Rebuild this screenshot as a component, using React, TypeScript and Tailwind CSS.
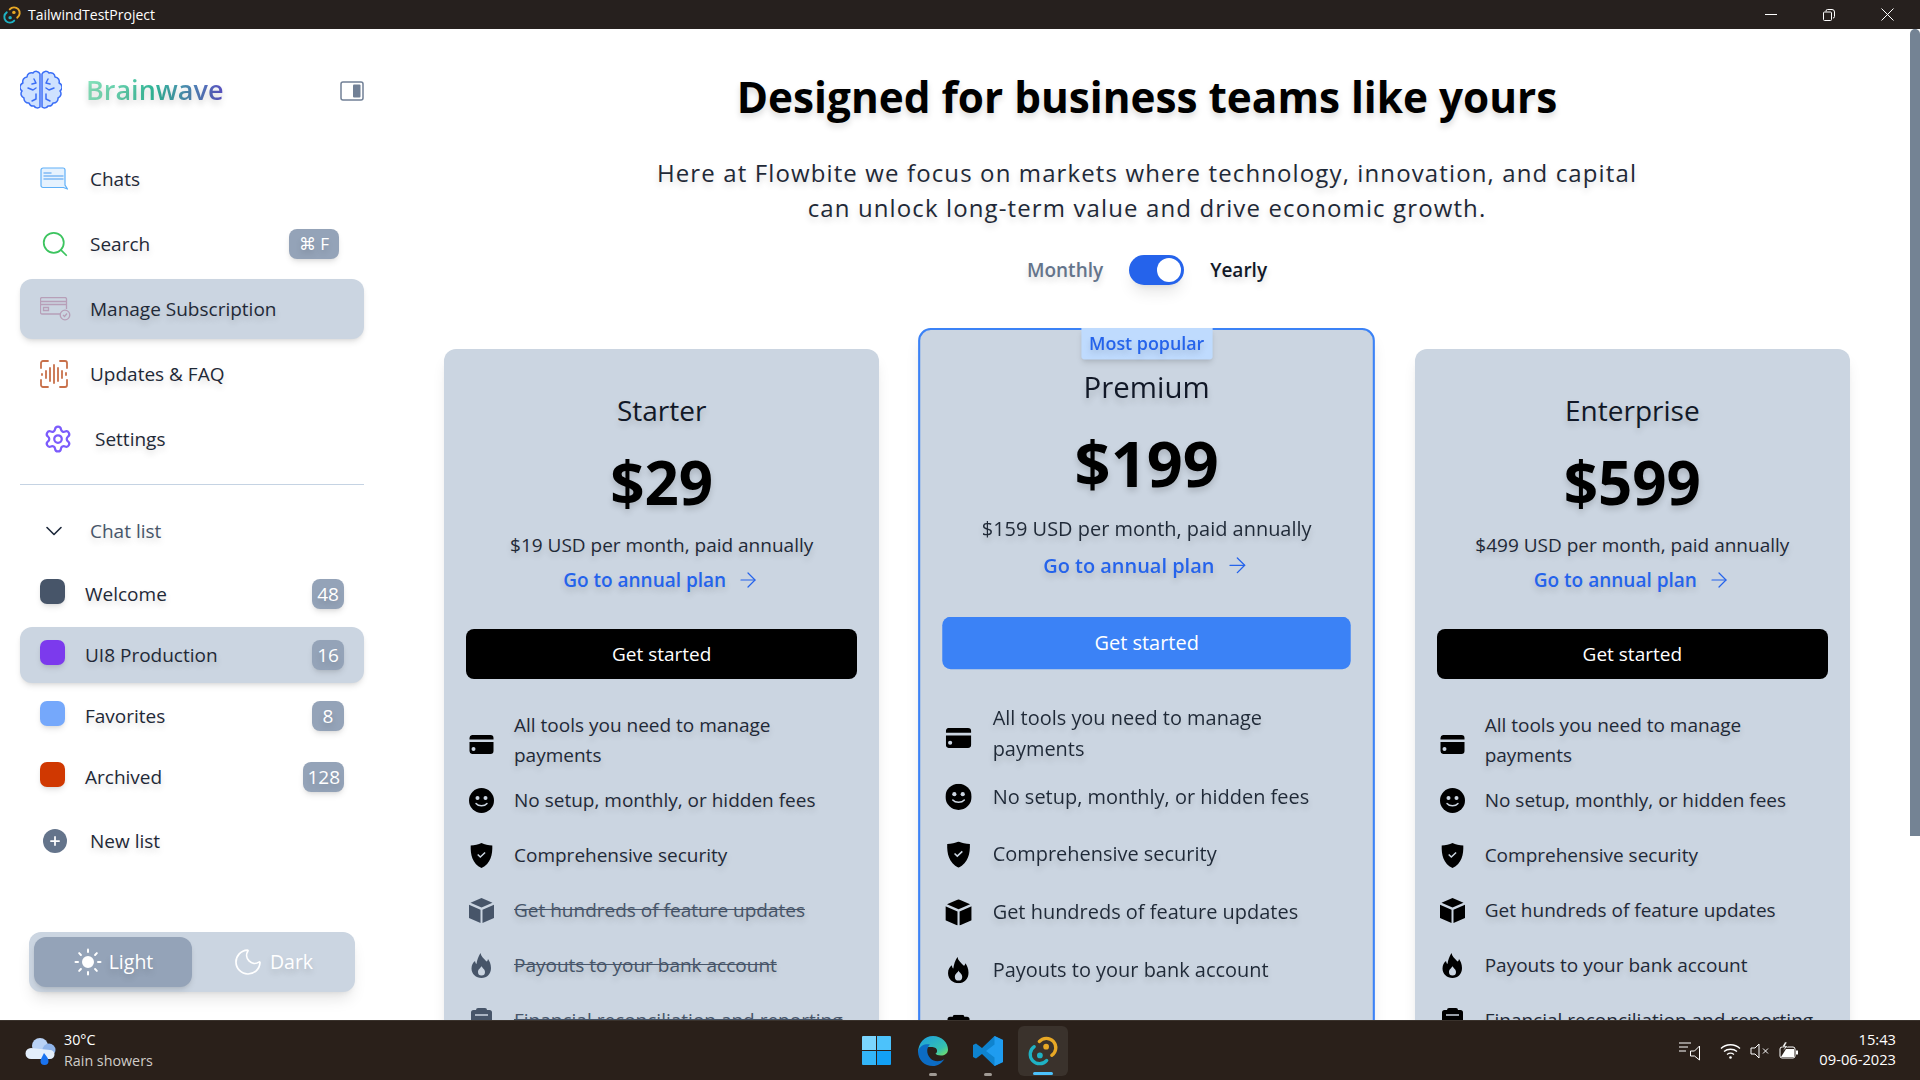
import { ArrowRight, ChevronDown, Moon, Plus, Search, Settings, Sun } from 'lucide-react';

const NAV = [
  { label: 'Chats', icon: <ChatIcon /> },
  { label: 'Search', icon: <Search className="w-[30px] h-[30px] text-[#3cc45f]" strokeWidth={1.4} />, kbd: true },
  { label: 'Manage Subscription', icon: <CardCheckIcon />, active: true },
  { label: 'Updates & FAQ', icon: <WaveIcon /> },
  { label: 'Settings', icon: <Settings className="ml-[3px] w-[30px] h-[30px] text-[#7c5cfc]" strokeWidth={1.8} />, indent: true },
];

const LISTS = [
  { label: 'Welcome', color: 'bg-[#475569]', count: 48 },
  { label: 'UI8 Production', color: 'bg-[#7c3aed]', count: 16, active: true },
  { label: 'Favorites', color: 'bg-[#75a8fb]', count: 8 },
  { label: 'Archived', color: 'bg-[#d03801]', count: 128 },
];

const PLANS = [
  { name: 'Starter', price: '$29', sub: '$19 USD per month, paid annually', off: 3 },
  { name: 'Premium', price: '$199', sub: '$159 USD per month, paid annually', popular: true, off: 6 },
  { name: 'Enterprise', price: '$599', sub: '$499 USD per month, paid annually', off: 6 },
];

const FEATURES = [
  { text: 'All tools you need to manage payments', icon: <CardSolid /> },
  { text: 'No setup, monthly, or hidden fees', icon: <SmileSolid /> },
  { text: 'Comprehensive security', icon: <ShieldSolid /> },
  { text: 'Get hundreds of feature updates', icon: <CubeSolid /> },
  { text: 'Payouts to your bank account', icon: <FlameSolid /> },
  { text: 'Financial reconciliation and reporting', icon: <ClipSolid /> },
];

function ChatIcon() {
  return (
    <svg width="28" height="24" viewBox="0 0 28 24" fill="none">
      <path d="M3 1h20a2 2 0 0 1 2 2v15l2.500 4-4-1.500H3a2 2 0 0 1-2-2V3a2 2 0 0 1 2-2z" fill="#e6f2fe" stroke="#60b0f8" strokeWidth="1.200" />
      <path d="M3.500 6h8M3.500 9h20M3.500 12h20" stroke="#4a9cf0" strokeWidth="1.200" />
    </svg>
  );
}

function CardCheckIcon() {
  return (
    <svg width="31" height="24" viewBox="0 0 31 24" fill="none" stroke="#b79fb8" strokeWidth="1.300">
      <path d="M23 17H2a1.500 1.500 0 0 1-1.500-1.500V2A1.500 1.500 0 0 1 2 .5h23A1.500 1.500 0 0 1 26.500 2v10" />
      <path d="M.5 4.500h26M.5 7.500h26M3.500 10.500h5v3h-5z" />
      <circle cx="25" cy="18" r="4.800" fill="#cbd5e1" />
      <path d="M23 18l1.500 1.500 2.500-3" />
    </svg>
  );
}

function WaveIcon() {
  return (
    <svg width="28" height="28" viewBox="0 0 28 28" fill="none" stroke="#c8704a" strokeWidth="1.800" strokeLinecap="round">
      <path d="M8 1H3a2 2 0 0 0-2 2v5M20 1h5a2 2 0 0 1 2 2v5M8 27H3a2 2 0 0 1-2-2v-5M20 27h5a2 2 0 0 0 2-2v-5" />
      <path d="M2 14v1M6 11v7M10 8v13M14 5v18M18 8v13M22 11v7M26 13v2" />
    </svg>
  );
}

function BrainLogo() {
  return (
    <svg width="42" height="40" viewBox="0 0 42 40" fill="#cfe2ff" stroke="#3b6ef6" strokeWidth="1.500" strokeLinecap="round" strokeLinejoin="round">
      <path d="M20 4A4 4 0 0 0 13 3A4.500 4.500 0 0 0 7 7A4.500 4.500 0 0 0 3 13A4.500 4.500 0 0 0 2 21A4.500 4.500 0 0 0 4 28A4.500 4.500 0 0 0 9 33A4.500 4.500 0 0 0 14 36A4 4 0 0 0 20 37Z" />
      <path d="M22 4A4 4 0 0 1 29 3A4.500 4.500 0 0 1 35 7A4.500 4.500 0 0 1 39 13A4.500 4.500 0 0 1 40 21A4.500 4.500 0 0 1 38 28A4.500 4.500 0 0 1 33 33A4.500 4.500 0 0 1 28 36A4 4 0 0 1 22 37Z" />
      <path d="M14 9l2 4-4 1M8 18l5 2 3-2M16 24v5l-4 2M28 9l-2 4 4 1M34 18l-5 2-3-2M26 24v5l4 2" fill="none" />
    </svg>
  );
}

function CardSolid() {
  return (
    <svg width="25" height="19" viewBox="0 0 25 19" fill="black">
      <path d="M3 0h18.500A3 3 0 0 1 24.500 3v1.500H.5V3A3 3 0 0 1 3 0zM.5 7h24v9a3 3 0 0 1-3 3H3a3 3 0 0 1-2.500-3zm4 5a2 2 0 1 0 0 4 2 2 0 0 0 0-4z" fillRule="evenodd" />
    </svg>
  );
}

function SmileSolid() {
  return (
    <svg width="25" height="25" viewBox="0 0 25 25">
      <circle cx="12.500" cy="12.500" r="12.500" fill="black" />
      <circle cx="8.500" cy="10" r="2" fill="#cbd5e1" />
      <circle cx="16.500" cy="10" r="2" fill="#cbd5e1" />
      <path d="M7 15.500c2.500 3 8.500 3 11 0" fill="none" stroke="#cbd5e1" strokeWidth="1.400" strokeLinecap="round" />
    </svg>
  );
}

function ShieldSolid() {
  return (
    <svg width="25" height="25" viewBox="0 0 25 25">
      <path d="M12.500 0c3 1.600 7 2.300 10.800 2.400.3 9-1.500 18-10.800 22.600C3.200 20.400 1.400 11.400 1.700 2.400 5.500 2.300 9.500 1.600 12.500 0z" fill="black" />
      <path d="M8.700 11.500l2.600 2.500 4.800-4.500" fill="none" stroke="#cbd5e1" strokeWidth="1.500" />
    </svg>
  );
}

function CubeSolid() {
  return (
    <svg width="25" height="25" viewBox="0 0 25 25" fill="black">
      <path d="M12.500 0l11 4.700-11 4.800-11-4.800z" />
      <path d="M0 6.700l11.500 5V25L0 20zM25 6.700l-11.500 5V25L25 20z" />
    </svg>
  );
}

function FlameSolid() {
  return (
    <svg width="25" height="25" viewBox="0 0 25 25" fill="black">
      <path fillRule="evenodd" d="M11.500 0c.5 3.500 3 5 5.500 8 1 1 1.500 0 2-2 1.500 2 3 5 3 9 0 6-4 10-9.500 10S2.500 21 2.500 15.500c0-3.500 1.500-6 3.500-7.500.5 1.500.5 2.500 1.500 3C8 7 9.500 3 11.500 0zM12.500 13c-.5 2-3.500 3-3.500 6a3.500 3.500 0 0 0 7 0c0-3-3-4-3.500-6z" />
    </svg>
  );
}

function ClipSolid() {
  return (
    <svg width="25" height="25" viewBox="0 0 25 25" fill="black">
      <path d="M9 0h7a2 2 0 0 1 2 2h2.500A2.500 2.500 0 0 1 23 4.500V22a3 3 0 0 1-3 3H5a3 3 0 0 1-3-3V4.500A2.500 2.500 0 0 1 4.500 2H7a2 2 0 0 1 2-2z" />
      <path d="M6 7h13" stroke="#cbd5e1" strokeWidth="1.500" />
    </svg>
  );
}

function TauriIcon({ size = 16 }: { size?: number }) {
  return (
    <svg width={size} height={size} viewBox="0 0 24 24" fill="none" strokeWidth="2.600" strokeLinecap="round">
      <path d="M9 4.500a7.500 7.500 0 1 1 10 11" stroke="#e8a825" />
      <path d="M15 19.500a7.500 7.500 0 1 1-10-11" stroke="#1fb2c4" />
      <circle cx="14.500" cy="8.500" r="2.300" fill="#e8a825" />
      <circle cx="9.500" cy="15.500" r="2.300" fill="#1fb2c4" />
    </svg>
  );
}

function WeatherIcon() {
  return (
    <svg width="32" height="30" viewBox="0 0 32 30">
      <circle cx="15" cy="10" r="8" fill="#b9d2f5" />
      <circle cx="24" cy="14" r="6.500" fill="#8fb4ea" />
      <path d="M6 12a5.500 5.500 0 0 0 0 11h19a4.500 4.500 0 0 0 0-9z" fill="#e3eefb" />
      <path d="M19 17c2 3 4.500 5 4.500 8a4 4 0 0 1-8 0c0-1 .5-2 1-3z" fill="#1a73f0" />
    </svg>
  );
}

function WinIcon() {
  return (
    <svg width="29" height="29" viewBox="0 0 29 29">
      <path d="M0 1a1 1 0 0 1 1-1h13v14H0z" fill="#7bd5fe" />
      <path d="M15 0h13a1 1 0 0 1 1 1v13H15z" fill="#4cc2fb" />
      <path d="M0 15h14v14H1a1 1 0 0 1-1-1z" fill="#33b5f8" />
      <path d="M15 15h14v13a1 1 0 0 1-1 1H15z" fill="#12a0f5" />
    </svg>
  );
}

function EdgeIcon() {
  return (
    <svg width="30" height="30" viewBox="0 0 30 30">
      <defs>
        <linearGradient id="edgeTop" x1="0" y1="0" x2="1" y2="1">
          <stop offset="0" stopColor="#1b9de2" />
          <stop offset="0.7" stopColor="#35c1b0" />
          <stop offset="1" stopColor="#7de15e" />
        </linearGradient>
      </defs>
      <path d="M15 0C24 0 30 6.500 30 13.500c0 4-3.500 6-7 6-3 0-5-1-5.500-2 2.500-1 2.500-6-3-6.500C8 10.500 2 13 0 17 0 7 6.500 0 15 0z" fill="url(#edgeTop)" />
      <path d="M0 15c2-6 8-7.500 12-6.500-3.500 3-4 9 .5 14 3.500 3.500 9.500 3.500 14 .5-3 4.500-7 7-11.500 7C6.500 30 0 24 0 15z" fill="#0c6cc4" />
    </svg>
  );
}

function CodeIcon() {
  return (
    <svg width="30" height="30" viewBox="0 0 30 30">
      <path d="M21.500 0L30 4v22l-8.500 4L9 18l-6 4.500L0 21v-12l3-1.500L9 12z" fill="#0e83cf" />
      <path d="M21.500 0L30 4v22l-8.500 4zM21.500 8.500L13 15l8.500 6.500z" fill="#1f9cf0" fillRule="evenodd" />
    </svg>
  );
}

function TrayIcons() {
  return (
    <div className="flex items-center text-white">
      <svg width="22" height="20" viewBox="0 0 22 20" fill="none" stroke="white" strokeWidth="1">
        <path d="M0 2h12M0 6h9M0 10h7M20.500 5v14l-5-4h-4V10h4z" />
      </svg>
      <svg className="ml-[19px]" width="21" height="16" viewBox="0 0 21 16" fill="none" stroke="white" strokeWidth="1.300">
        <path d="M1 5.500c5-5 14-5 19 0M4 8.500c3.500-3 9.500-3 13 0M7 11.500c2-1.500 5-1.500 7 0" />
        <circle cx="10.500" cy="14.500" r="1.300" fill="white" stroke="none" />
      </svg>
      <svg className="ml-[9px]" width="20" height="16" viewBox="0 0 20 16" fill="none" stroke="white" strokeWidth="1">
        <path d="M9 1v14l-4-4H1V5h4zM13 5.500l5 5M18 5.500l-5 5" />
      </svg>
      <svg className="ml-[9px]" width="20" height="18" viewBox="0 0 20 18" fill="none">
        <rect x="1" y="5" width="15" height="11" rx="2" stroke="white" />
        <path d="M2 15l5-8h8v8z" fill="white" />
        <path d="M17 8.500h2v4h-2z" fill="white" />
        <path d="M6 0L3 5h3L4 9l5-5H6l2-4z" fill="white" stroke="#2a201a" strokeWidth="0.500" />
      </svg>
    </div>
  );
}

function Badge({ children }: { children: React.ReactNode }) {
  return <span className="ml-auto h-[30px] min-w-[32px] px-[4px] rounded-lg bg-[#94a3b8] text-white text-[19px] font-medium leading-[30px] text-center shadow-md">{children}</span>;
}

function Sidebar() {
  return (
    <aside className="w-[384px] shrink-0 px-5 flex flex-col">
      <div className="h-[100px] pt-[41px] flex items-start">
        <BrainLogo />
        <span className="ml-[24px] text-[27px] leading-[40px] font-semibold bg-gradient-to-r from-[#8be8c0] via-[#2fb99a] to-[#5a52c4] bg-clip-text text-transparent">Brainwave</span>
        <svg className="ml-auto mt-[11px]" width="24" height="20" viewBox="0 0 24 20" fill="none">
          <rect x="1" y="1" width="22" height="18" rx="2" stroke="#718096" strokeWidth="1.500" />
          <rect x="13" y="3.500" width="7.500" height="13" rx="1" fill="#718096" />
        </svg>
      </div>
      <nav className="mt-[20px] flex flex-col gap-[5px]">
        {NAV.map((item) => (
          <div key={item.label} className={'h-[60px] rounded-xl flex items-center text-[19px] text-[#1f2937] ' + (item.active ? 'bg-[#cbd5e1] shadow-md' : '')}>
            <span className="w-[70px] pl-[20px] flex justify-start items-center shrink-0">{item.icon}</span>
            <span className={item.indent ? 'ml-[5px]' : ''}>{item.label}</span>
            {item.kbd && <span className="ml-auto mr-[25px] h-[30px] w-[50px] rounded-lg bg-[#94a3b8] text-white text-[17px] leading-[30px] text-center shadow-md">⌘ F</span>}
          </div>
        ))}
      </nav>
      <div className="mt-[15px] border-t border-[#c5d3e3]" />
      <div className="mt-[26px] h-[40px] flex items-center text-[19px] text-[#475569]">
        <ChevronDown className="ml-[20px] w-[28px] h-[28px] text-[#1e293b]" strokeWidth={1.4} />
        <span className="ml-[22px]">Chat list</span>
      </div>
      <div className="mt-[15px] flex flex-col gap-[5px]">
        {LISTS.map((l) => (
          <div key={l.label} className={'h-[56px] rounded-xl flex items-center pl-[20px] pr-[20px] text-[19px] text-[#1f2937] ' + (l.active ? 'bg-[#cbd5e1] shadow-md' : '')}>
            <span className={'w-[25px] h-[25px] rounded-[7px] shadow-md -mt-[5px] ' + l.color} />
            <span className="ml-[20px]">{l.label}</span>
            <Badge>{l.count}</Badge>
          </div>
        ))}
      </div>
      <div className="mt-[11px] h-[50px] flex items-center text-[19px] text-[#1f2937]">
        <span className="ml-[23px] w-[24px] h-[24px] rounded-full bg-[#64748b] grid place-items-center">
          <Plus className="w-[14px] h-[14px] text-white" strokeWidth={3} />
        </span>
        <span className="ml-[23px]">New list</span>
      </div>
      <div className="mt-[66px] mx-[9px] h-[60px] rounded-xl bg-[#cbd5e1] shadow-lg p-[5px] flex text-[19.500px] font-medium text-white">
        <div className="w-[158px] rounded-xl bg-[#94a3b8] shadow-md flex items-center justify-center gap-[6px]">
          <Sun className="w-[30px] h-[30px]" fill="white" strokeWidth={1.6} />
          <span>Light</span>
        </div>
        <div className="flex-1 flex items-center justify-center gap-[6px]">
          <Moon className="ml-[3px] w-[32px] h-[32px]" strokeWidth={1.3} />
          <span>Dark</span>
        </div>
      </div>
    </aside>
  );
}

function PlanCard({ plan }: { plan: (typeof PLANS)[number] }) {
  const pop = plan.popular;
  return (
    <div className={'relative h-[840px] rounded-xl bg-[#cbd5e1] shadow-lg flex flex-col items-center ' + (pop ? 'scale-105 border-2 border-[#3b82f6] px-[21px] pt-[29px] z-10' : 'px-[22px] pt-[36px]')}>
      {pop && <span className="absolute -top-[2px] left-1/2 -translate-x-1/2 w-[125px] h-[30px] rounded-b-[3px] bg-[#bfdbfe] text-[#2563eb] text-[17px] leading-[30px] font-semibold text-center shadow-md">Most popular</span>}
      <h3 className="text-[28px] leading-[50px] text-[#111827]">{plan.name}</h3>
      <div className="mt-[12px] text-[60px] leading-[70px] font-bold text-black">{plan.price}</div>
      <p className="mt-[13px] text-[19px] leading-[30px] text-[#1f2937]">{plan.sub}</p>
      <a className="mt-[5px] text-[19px] leading-[30px] font-semibold text-[#2563eb] flex items-center gap-[10px]">
        Go to annual plan <ArrowRight className="w-[24px] h-[24px]" strokeWidth={1.2} />
      </a>
      <button className={'mt-[34px] w-full h-[50px] rounded-lg text-white text-[19px] font-medium ' + (pop ? 'bg-[#3b82f6]' : 'bg-black')}>Get started</button>
      <ul className="mt-[31px] w-full pl-[3px] flex flex-col gap-[25px] text-left">
        {FEATURES.map((f, i) => {
          const off = i >= plan.off;
          return (
            <li key={f.text} className={'flex items-center gap-[20px] text-[19px] leading-[30px] ' + (i === 0 ? '-mb-[10px] ' : '') + (off ? 'text-[#475569]' : 'text-[#1f2937]')}>
              <span className={'shrink-0 w-[25px] h-[25px] flex items-center justify-center ' + (i === 0 ? 'mt-[8px] ' : '') + (off ? '[&_svg]:fill-[#475569] [&_path]:fill-[#475569]' : '')}>{f.icon}</span>
              <span className={off ? 'line-through whitespace-nowrap' : ''}>{f.text}</span>
            </li>
          );
        })}
      </ul>
    </div>
  );
}

export default function App() {
  return (
    <div className="h-screen w-screen overflow-hidden flex flex-col bg-white font-['Open_Sans',sans-serif] [text-shadow:0_4px_6px_rgba(0,0,0,0.15)]">
      <header className="h-[29px] shrink-0 bg-[#26201e] flex items-center text-white text-[14px] [text-shadow:none]">
        <span className="ml-[3px]"><TauriIcon size={18} /></span>
        <span className="ml-[7px]">TailwindTestProject</span>
        <div className="ml-auto flex items-center">
          <span className="w-[12px] border-t border-white mr-[46px]" />
          <svg className="mr-[46px]" width="12" height="12" viewBox="0 0 12 12" fill="none" stroke="white"><path d="M3 2.500V2a1.500 1.500 0 0 1 1.500-1.500H9A2.500 2.500 0 0 1 11.500 3v4.500A1.500 1.500 0 0 1 10 9M1.500 3h6A1 1 0 0 1 8.500 4v6.500a1 1 0 0 1-1 1h-6a1 1 0 0 1-1-1V4a1 1 0 0 1 1-1z" /></svg>
          <svg className="mr-[26px]" width="13" height="13" viewBox="0 0 13 13" stroke="white"><path d="M.5.500l12 12M12.500.500l-12 12" /></svg>
        </div>
      </header>
      <div className="flex-1 min-h-0 flex">
        <Sidebar />
        <main className="flex-1 min-w-0 overflow-hidden px-[60px] text-center">
          <h1 className="mt-[38px] text-[42.300px] leading-[60px] font-bold text-black">Designed for business teams like yours</h1>
          <p className="mt-[28px] mx-auto w-[1000px] text-[24px] leading-[35px] tracking-[1.120px] text-[#1f2937]">
            Here at Flowbite we focus on markets where technology, innovation, and capital can unlock long-term value and drive economic growth.
          </p>
          <div className="mt-[30px] flex items-center justify-center text-[19px] font-semibold">
            <span className="text-[#64748b]">Monthly</span>
            <span className="mx-[26px] w-[55px] h-[30px] rounded-full bg-[#2563eb] shadow-lg flex justify-end items-center pr-[3px]">
              <span className="w-[24px] h-[24px] rounded-full bg-white" />
            </span>
            <span className="text-[#111827]">Yearly</span>
          </div>
          <div className="mt-[64px] grid grid-cols-3 gap-[50px] text-center">
            {PLANS.map((p) => <PlanCard key={p.name} plan={p} />)}
          </div>
        </main>
        <div className="w-[10px] shrink-0">
          <div className="h-[807px] rounded-t-full bg-[#748394]" />
        </div>
      </div>
      <footer className="h-[60px] shrink-0 bg-[#2a201a] border-t border-[#3a322c] flex items-center text-white relative z-20 [text-shadow:none]">
        <span className="ml-[25px]"><WeatherIcon /></span>
        <div className="ml-[7px] text-[14.300px] leading-[21px] -mt-[2px]">
          <div>30°C</div>
          <div className="text-[#d0ccc8]">Rain showers</div>
        </div>
        <div className="absolute left-[862px] top-0 h-full flex items-center">
          <WinIcon />
          <span className="ml-[27px] relative"><EdgeIcon /><span className="absolute left-[11px] top-[37px] w-[8px] h-[3px] rounded-full bg-[#a09a94]" /></span>
          <span className="ml-[25px] relative"><CodeIcon /><span className="absolute left-[11px] top-[37px] w-[8px] h-[3px] rounded-full bg-[#a09a94]" /></span>
          <span className="ml-[15px] w-[50px] h-[50px] rounded-md bg-[#3a322c] relative grid place-items-center"><TauriIcon size={30} /><span className="absolute left-[15px] bottom-[1px] w-[20px] h-[3px] rounded-full bg-[#4cc2fb]" /></span>
        </div>
        <div className="ml-auto mr-[24px] flex items-center">
          <TrayIcons />
          <div className="ml-[20px] text-right text-[14.700px] leading-[20px] -mt-[4px]">
            <div>15:43</div>
            <div>09-06-2023</div>
          </div>
        </div>
      </footer>
    </div>
  );
}
